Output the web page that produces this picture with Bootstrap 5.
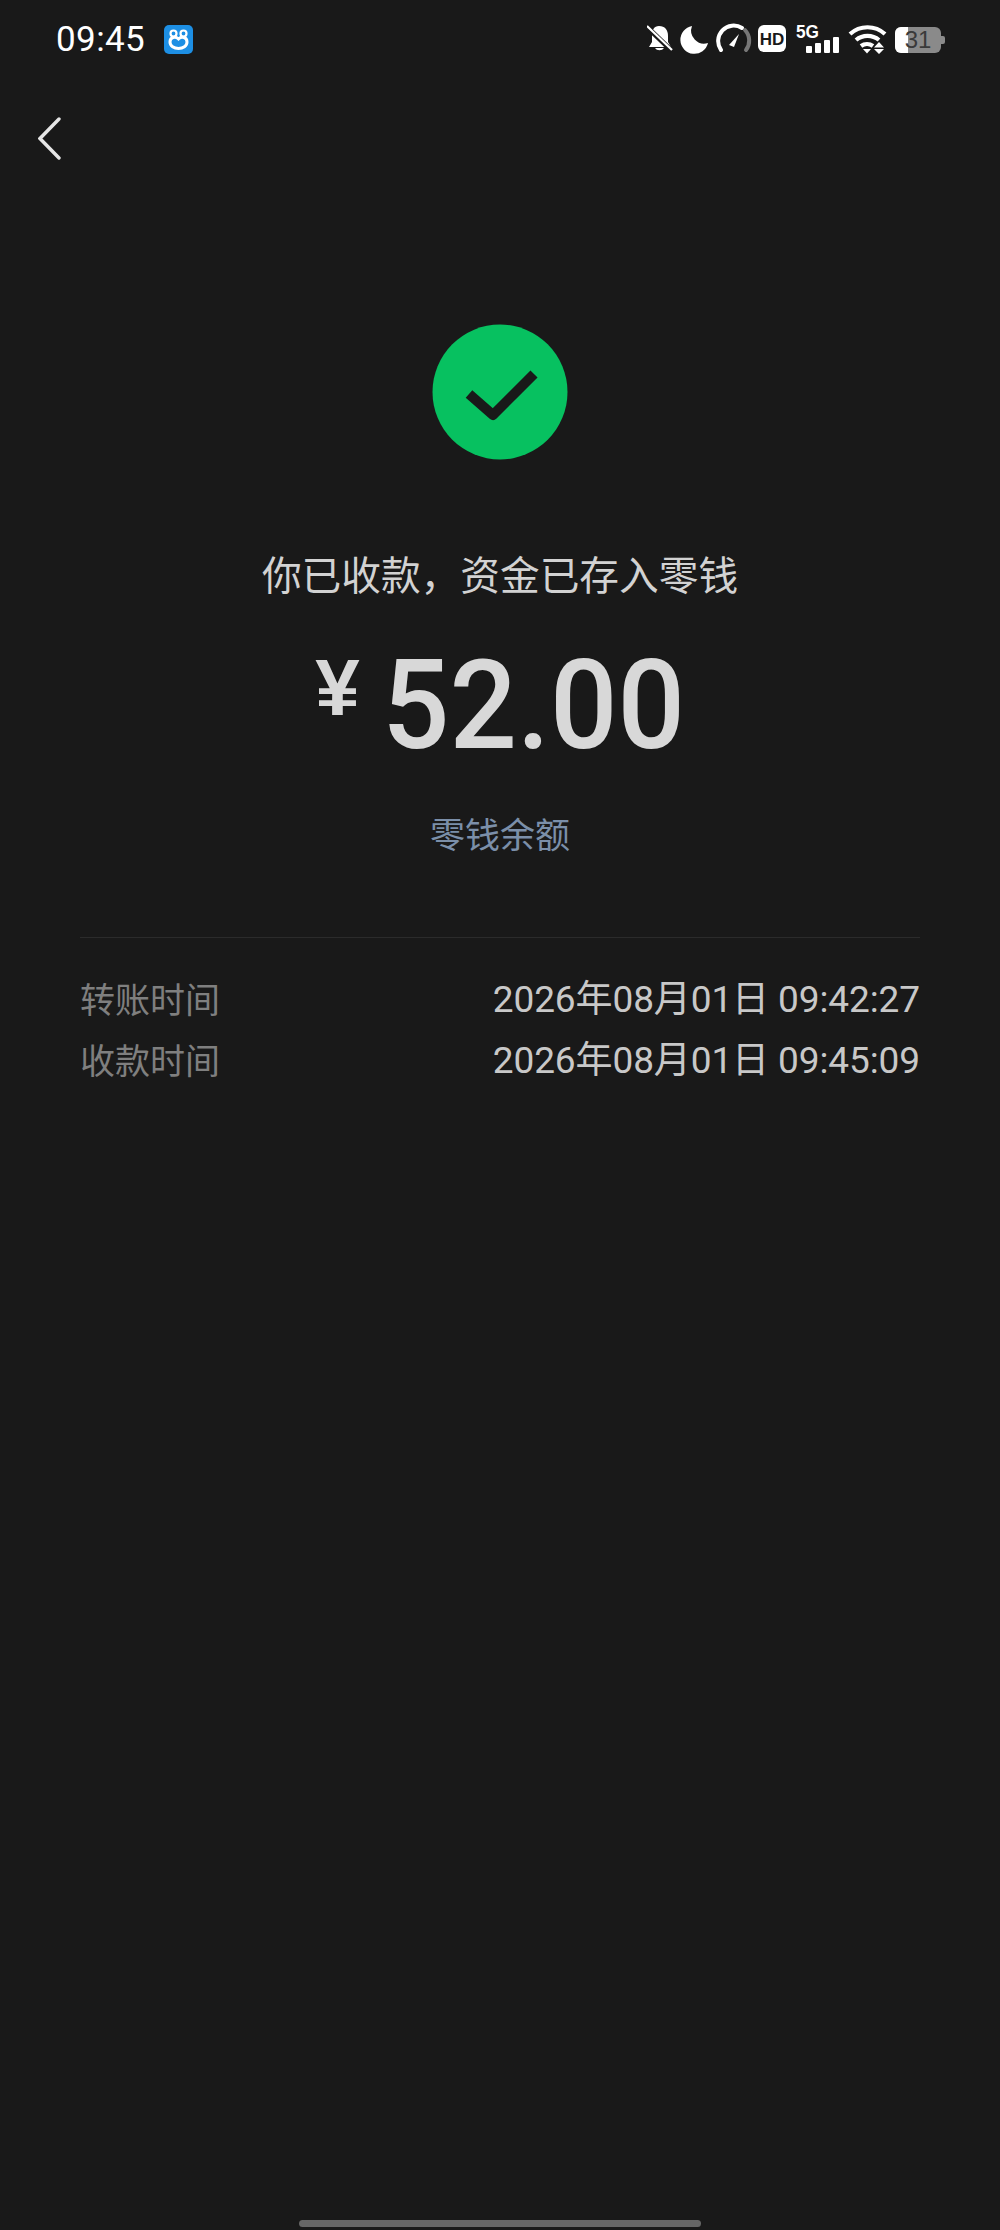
<!DOCTYPE html>
<html lang="zh-CN">
<head>
  <meta charset="UTF-8"/>
  <meta name="viewport" content="width=device-width, initial-scale=1.0"/>
  <title>收款详情</title>
  <link rel="stylesheet" href="https://cdn.jsdelivr.net/npm/bootstrap@5.3.0/dist/css/bootstrap.min.css"/>
  <style>
    body {
      background-color: #191919;
      font-family: Roboto, "Noto Sans CJK SC", sans-serif;
    }
    .pantalla { width: 1000px; height: 2230px; position: relative; overflow: hidden; }
    .barra-estado { height: 78px; padding: 0 55px 0 56px; color: #fff; }
    .hora { font-size: 35px; line-height: 1; letter-spacing: .4px; }
    .app-icono { width: 29px; height: 29px; margin-left: 19px; }
    .iconos-estado svg { display: block; }
    .iconos-estado text { font-family: "Liberation Sans", sans-serif; font-weight: 700; }
    .atras { height: 246px; padding: 39px 0 0 38px; }
    .titulo { font-size: 39.7px; line-height: 60px; color: #d2d2d2; margin-top: 83px; font-family: "Noto Sans CJK SC", sans-serif; }
    .monto { color: #d8d8d8; height: 110px; margin-top: 47px; line-height: 1; }
    .monto-simbolo { font-size: 80px; font-weight: 700; font-family: "Liberation Sans", sans-serif; margin-right: 22px; position: relative; top: -17px; }
    .monto-valor { font-size: 125px; font-weight: 500; display: inline-block; transform: scaleX(.95); transform-origin: left center; margin-right: -16px; }
    .saldo { font-size: 35px; line-height: 52px; color: #7b8fa9; margin-top: 47px; font-family: "Noto Sans CJK SC", sans-serif; }
    .detalle { margin: 78px 80px 0; border-top: 1px solid #2b2b2b; padding-top: 31px; }
    .fila { height: 61px; font-size: 35px; line-height: 61px; }
    .etiqueta { color: #7f7f7f; line-height: 57px; font-family: "Noto Sans CJK SC", sans-serif; }
    .valor { color: #c8c8c8; font-size: 37px; letter-spacing: -.1px; }
    .indicador { position: absolute; left: 299px; top: 2220px; width: 402px; height: 7px; border-radius: 4px; background-color: #666; }
  </style>
</head>
<body class="m-0">
  <div class="pantalla">
    <!-- Barra de estado -->
    <div class="barra-estado d-flex align-items-center justify-content-between">
      <div class="d-flex align-items-center">
        <span class="hora">09:45</span>
        <svg class="app-icono" viewBox="0 0 29 29">
          <rect width="29" height="29" rx="5" fill="#1d8fe4"/>
          <circle cx="9.5" cy="8.5" r="3" fill="none" stroke="#fff" stroke-width="2.2"/>
          <circle cx="19.5" cy="8.5" r="3" fill="none" stroke="#fff" stroke-width="2.2"/>
          <path d="M14.5 14c-3-3-8.5-2-8.500 3 0 4 4 6.500 8.500 6.500s8.500-2.500 8.500-6.500c0-5-5.500-6-8.500-3z" fill="none" stroke="#fff" stroke-width="3"/>
        </svg>
      </div>
      <div class="iconos-estado d-flex align-items-center">
        <svg width="298" height="32" viewBox="647 23 298 32">
          <!-- campana silenciada -->
          <path d="M659 26c6 0 9 4 9 10v6l3 5h-22l3-5v-7c0-5 2-9 7-9z" fill="#fff"/>
          <path d="M655 48a5 4 0 0 0 9 0z" fill="#fff"/>
          <path d="M646 26l26 25" stroke="#191919" stroke-width="5"/>
          <path d="M647 26l25 24" stroke="#fff" stroke-width="2.200"/>
          <!-- luna -->
          <path d="M692 26a13 13 0 0 0 16 17 14 14 0 1 1-16-17z" fill="#fff"/>
          <!-- velocimetro -->
          <path d="M721 50a15.500 15.500 0 0 1 21-22" fill="none" stroke="#fff" stroke-width="4" stroke-linecap="round"/>
          <path d="M745 30a15.500 15.500 0 0 1 1 20" fill="none" stroke="#777" stroke-width="4" stroke-linecap="round"/>
          <path d="M729 45l10-11-5 13z" fill="#fff"/>
          <!-- HD -->
          <rect x="758" y="25" width="28" height="27" rx="6" fill="#fff"/>
          <text x="772" y="44.500" font-size="17" text-anchor="middle" fill="#191919">HD</text>
          <!-- 5G y cobertura -->
          <text x="796" y="38" font-size="18" fill="#fff" textLength="23" lengthAdjust="spacingAndGlyphs">5G</text>
          <rect x="806" y="46" width="6" height="7" rx="1" fill="#fff"/>
          <rect x="815" y="43" width="6" height="10" rx="1" fill="#fff"/>
          <rect x="824" y="40" width="6" height="13" rx="1" fill="#fff"/>
          <rect x="833" y="37" width="6" height="16" rx="1" fill="#fff"/>
          <!-- wifi -->
          <path d="M850 34a26 26 0 0 1 35 0" fill="none" stroke="#fff" stroke-width="4.200"/>
          <path d="M856 40a18 18 0 0 1 23 0" fill="none" stroke="#fff" stroke-width="4.200"/>
          <path d="M861 46a10 10 0 0 1 12 0" fill="none" stroke="#fff" stroke-width="4.200"/>
          <path d="M863 49h8l-4 4.500z" fill="#fff"/>
          <path d="M879 42l-5 5.500h10zM874 49h10l-5 5z" fill="#fff"/>
          <!-- bateria -->
          <rect x="895" y="27" width="46" height="26" rx="6" fill="#8a8a8a"/>
          <path d="M901 27h7v26h-7a6 6 0 0 1-6-6v-14a6 6 0 0 1 6-6z" fill="#fff"/>
          <path d="M941 36h2a2 2 0 0 1 2 2v4a2 2 0 0 1-2 2h-2z" fill="#8a8a8a"/>
          <text x="918" y="48" font-size="24" text-anchor="middle" fill="#3a3a3a" style="font-weight:400">31</text>
        </svg>
      </div>
    </div>

    <!-- Volver -->
    <div class="atras">
      <svg width="24" height="44" viewBox="0 0 24 44">
        <path d="M21 2L2 21.500 21 41" fill="none" stroke="#e6e6e6" stroke-width="3.400" stroke-linecap="round"/>
      </svg>
    </div>

    <!-- Resultado -->
    <main class="text-center">
      <svg class="d-block mx-auto" width="136" height="136" viewBox="0 0 136 136">
        <circle cx="68" cy="68" r="67.500" fill="#07c160"/>
        <path d="M37 70l24 21 41-41" fill="none" stroke="#191919" stroke-width="10" stroke-linejoin="round"/>
      </svg>
      <div class="titulo">你已收款，资金已存入零钱</div>
      <div class="monto d-flex justify-content-center align-items-center">
        <span class="monto-simbolo">¥</span><span class="monto-valor">52.00</span>
      </div>
      <div class="saldo">零钱余额</div>
    </main>

    <!-- Fechas -->
    <section class="detalle">
      <div class="fila d-flex justify-content-between">
        <span class="etiqueta">转账时间</span>
        <span class="valor">2026年08月01日 09:42:27</span>
      </div>
      <div class="fila d-flex justify-content-between">
        <span class="etiqueta">收款时间</span>
        <span class="valor">2026年08月01日 09:45:09</span>
      </div>
    </section>

    <div class="indicador"></div>
  </div>
  <script src="https://cdn.jsdelivr.net/npm/bootstrap@5.3.0/dist/js/bootstrap.bundle.min.js"></script>
</body>
</html>
